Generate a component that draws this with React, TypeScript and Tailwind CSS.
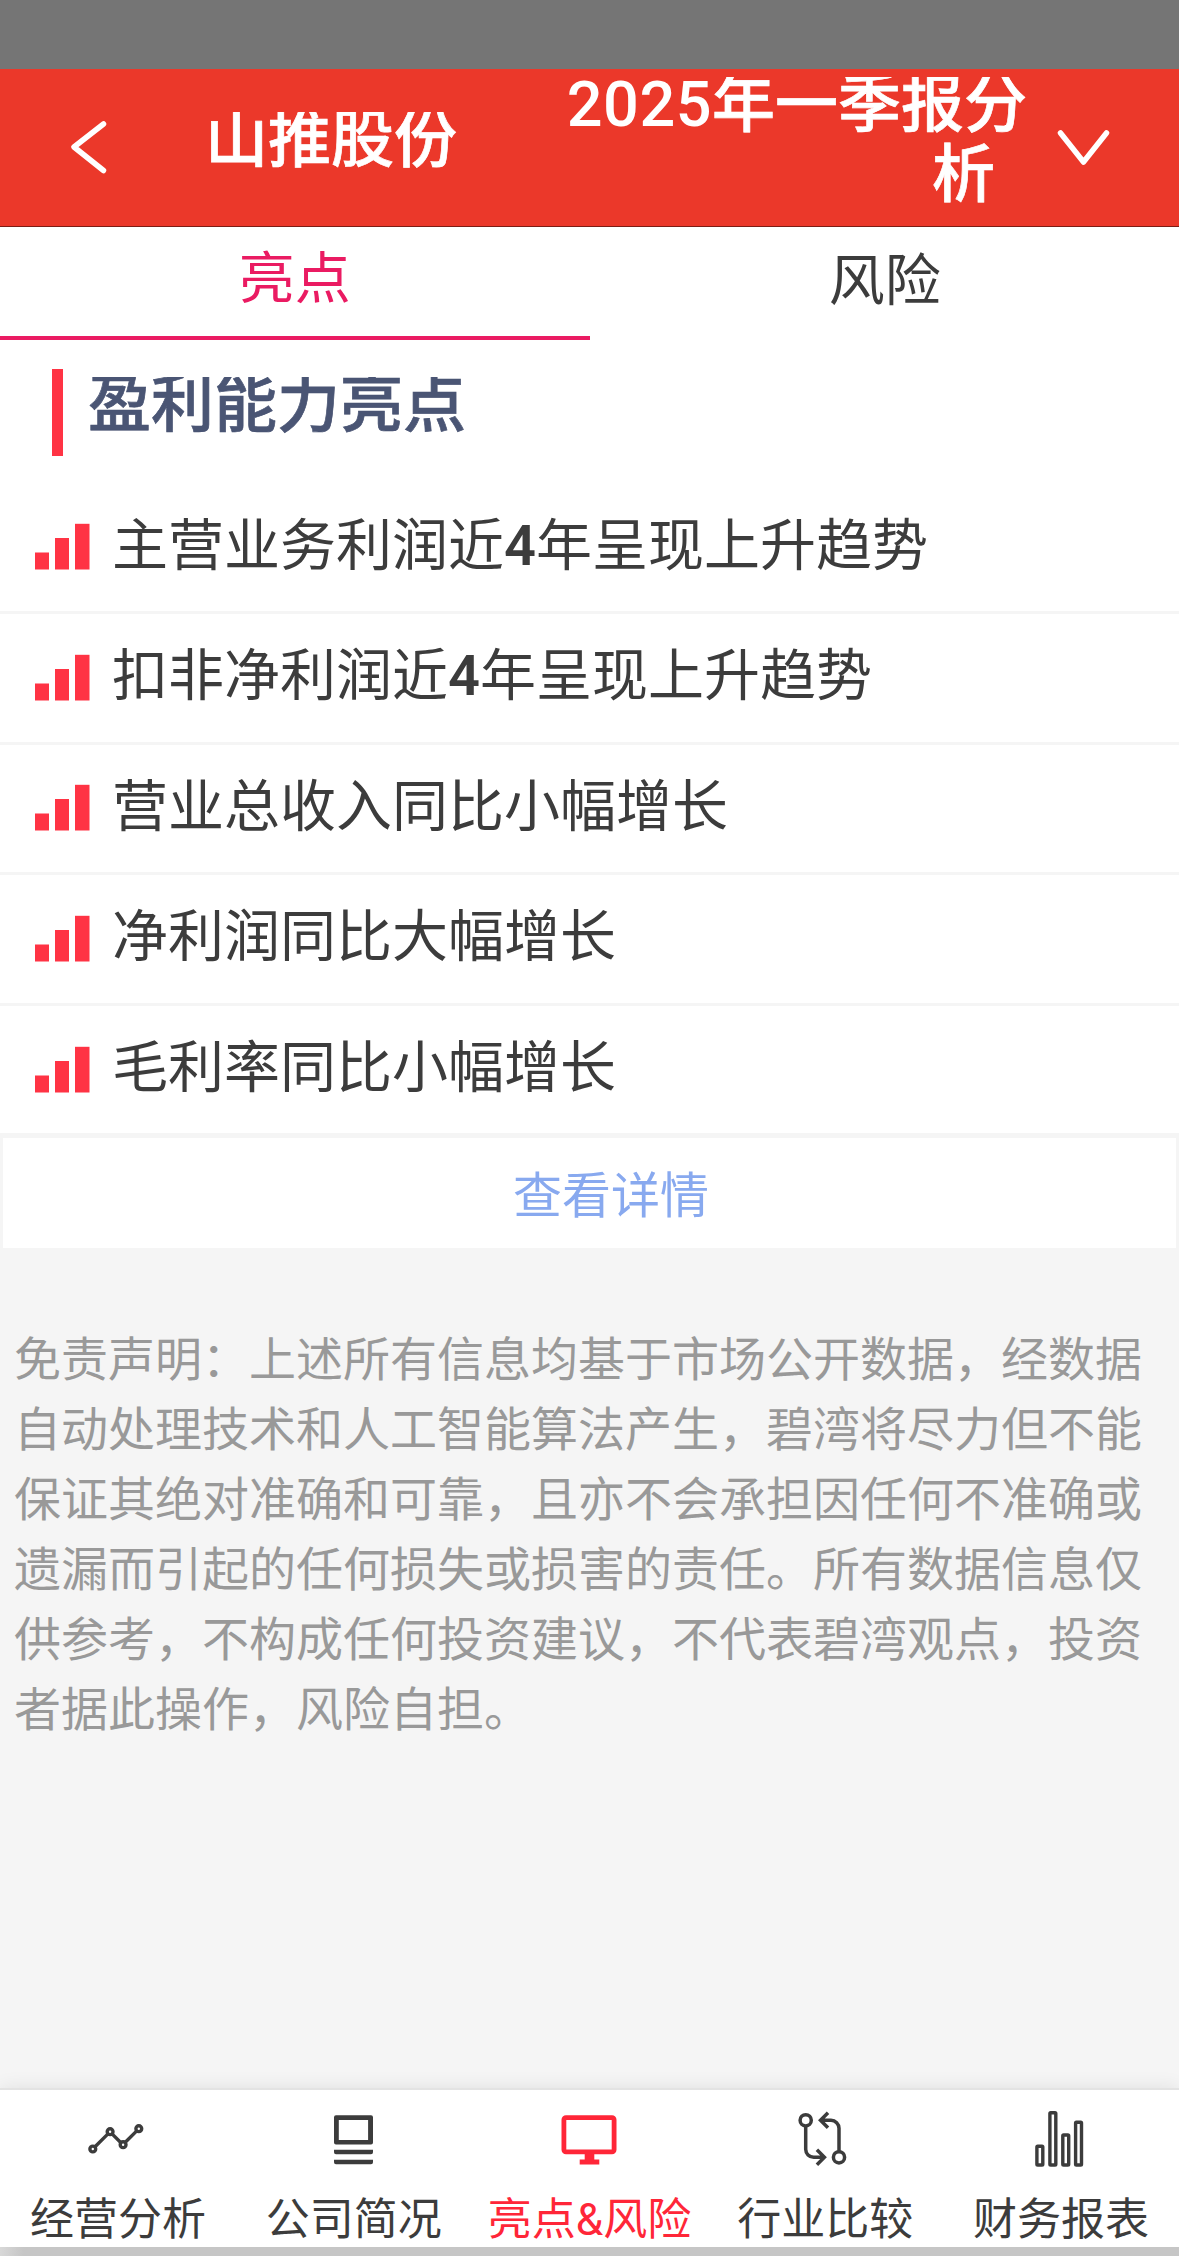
import React from "react";

type Part = { text: string; strong?: boolean };

const highlights: Part[][] = [
  [{ text: "主营业务利润近" }, { text: "4", strong: true }, { text: "年呈现上升趋势" }],
  [{ text: "扣非净利润近" }, { text: "4", strong: true }, { text: "年呈现上升趋势" }],
  [{ text: "营业总收入同比小幅增长" }],
  [{ text: "净利润同比大幅增长" }],
  [{ text: "毛利率同比小幅增长" }],
];

const disclaimer =
  "免责声明：上述所有信息均基于市场公开数据，经数据自动处理技术和人工智能算法产生，碧湾将尽力但不能保证其绝对准确和可靠，且亦不会承担因任何不准确或遗漏而引起的任何损失或损害的责任。所有数据信息仅供参考，不构成任何投资建议，不代表碧湾观点，投资者据此操作，风险自担。";

function BarsIcon() {
  return (
    <svg width="56" height="48" viewBox="0 0 56 48" className="shrink-0" fill="#ff3344">
      <rect x="0" y="29.5" width="14" height="17" />
      <rect x="20" y="15" width="14" height="31.5" />
      <rect x="40" y="0.8" width="14.5" height="45.7" />
    </svg>
  );
}

function TrendIcon() {
  return (
    <svg width="60" height="60" viewBox="0 0 60 60" fill="none" stroke="currentColor" strokeWidth="3.400">
      <circle cx="4.800" cy="39" r="2.900" />
      <circle cx="22.100" cy="21.700" r="2.900" />
      <circle cx="35.100" cy="34.700" r="2.900" />
      <circle cx="50.800" cy="18.700" r="2.900" />
      <path d="M7.300 36.500 19.700 24.100M24.300 24.100l8.400 8.400M37.300 32.300l11.200-11.200" />
    </svg>
  );
}

function DeskIcon() {
  return (
    <svg width="60" height="60" viewBox="0 0 60 60" fill="currentColor">
      <path
        fillRule="evenodd"
        d="M12 5.300h35a2 2 0 0 1 2 2v25.300a2 2 0 0 1-2 2h-35a2 2 0 0 1-2-2V7.300a2 2 0 0 1 2-2ZM14.800 10.100v20h29.300v-20Z"
      />
      <path d="M10 39.700h39v2.500a2 2 0 0 1-2 2h-35a2 2 0 0 1-2-2ZM10 49.700h39v2.500a2 2 0 0 1-2 2h-35a2 2 0 0 1-2-2Z" />
    </svg>
  );
}

function MonitorIcon() {
  return (
    <svg width="60" height="60" viewBox="0 0 60 60" fill="currentColor">
      <path
        fillRule="evenodd"
        d="M7 5.300h46a4.500 4.500 0 0 1 4.500 4.500v30a4.500 4.500 0 0 1-4.500 4.500H35.300v5.200h5V54.500H20.700V49.500h5v-5.200H7a4.500 4.500 0 0 1-4.500-4.500v-30A4.500 4.500 0 0 1 7 5.300ZM7.300 10.100v29.500h45.400V10.100Z"
      />
    </svg>
  );
}

function CompareIcon() {
  return (
    <svg width="60" height="60" viewBox="0 0 60 60" fill="none" stroke="currentColor" strokeWidth="3.500">
      <circle cx="10.700" cy="10.300" r="5.600" />
      <circle cx="44" cy="47.300" r="5.600" />
      <path d="M10.700 16v23.300a8 8 0 0 0 8 8h11.500M21.900 39.800l7.500 7.500-7.500 7.500" />
      <path d="M44 41.500V18.300a8 8 0 0 0-8-8H24.700M33 2.800l-7.500 7.500 7.500 7.500" />
    </svg>
  );
}

function ChartIcon() {
  return (
    <svg width="60" height="60" viewBox="0 0 60 60" fill="none" stroke="currentColor" strokeWidth="3.400">
      <rect x="5.900" y="36.300" width="5.900" height="18.700" rx="0.8" />
      <rect x="18.900" y="2.800" width="5.900" height="52.200" rx="0.8" />
      <rect x="31.800" y="25" width="5.900" height="30" rx="0.8" />
      <rect x="44.600" y="12.200" width="5.900" height="42.800" rx="0.8" />
    </svg>
  );
}

const navItems = [
  { label: "经营分析", icon: <TrendIcon /> },
  { label: "公司简况", icon: <DeskIcon /> },
  {
    label: "亮点&风险",
    content: (
      <>
        亮点<span className="font-[Roboto] leading-none">&amp;</span>风险
      </>
    ),
    icon: <MonitorIcon />,
    active: true,
  },
  { label: "行业比较", icon: <CompareIcon /> },
  { label: "财务报表", icon: <ChartIcon /> },
];

export default function App() {
  return (
    <div
      lang="zh-CN"
      className="flex h-[2256px] w-[1179px] flex-col overflow-hidden bg-[#f5f5f5] font-['Noto_Sans_CJK_SC',sans-serif] text-[#3c3c3c]"
    >
      <div className="h-[69px] shrink-0 bg-[#757575]" />

      <header className="flex h-[158px] shrink-0 border-b border-[#7c1d15] bg-[#eb382a] text-[63px] font-medium text-white [-webkit-text-stroke:0.7px_currentColor]">
        <svg width="140" height="157" viewBox="0 0 140 157" className="shrink-0" fill="none" stroke="currentColor" strokeWidth="5.500" strokeLinecap="round" strokeLinejoin="round">
          <path d="M103.500 55 74 78l29.500 23.500" />
        </svg>
        <div className="mt-[43px] h-[68px] w-[400px] shrink-0 overflow-hidden pl-[65px]">
          <div className="-mt-[13px] leading-[70px]">山推股份</div>
        </div>
        <div className="mt-[8px] h-[140px] w-[490px] shrink-0 overflow-hidden text-right">
          <div className="-mt-[13px] h-[70px] whitespace-nowrap pr-[3px] leading-[70px]">
            <span className="font-[Roboto] leading-none tracking-[0.5px] [-webkit-text-stroke:0]">2025</span>年一季报分
          </div>
          <div className="h-[70px] pr-[35px] leading-[70px]">析</div>
        </div>
        <svg width="149" height="157" viewBox="0 0 149 157" className="shrink-0" fill="none" stroke="currentColor" strokeWidth="5.500" strokeLinecap="round" strokeLinejoin="round">
          <path d="M30.500 64 53.500 93l23-29" />
        </svg>
      </header>

      <div className="grid h-[113px] shrink-0 grid-cols-2 bg-white text-center text-[56px] leading-[94px]">
        <div className="border-b-4 border-[#ea1b62] text-[#ea1b62]">亮点</div>
        <div className="pl-px pt-[2px]">风险</div>
      </div>

      <section className="shrink-0 bg-white">
        <div className="flex h-[143.400px] pl-[52px] pt-[29px]">
          <div className="h-[87px] w-[11px] bg-[#ff3344]" />
          <h2 className="mt-[8px] h-[75px] overflow-hidden pl-[25px] text-[63px] font-medium text-[#4a5574] [-webkit-text-stroke:0.7px_currentColor]">
            <div className="-mt-[13px] leading-[70px]">盈利能力亮点</div>
          </h2>
        </div>
        <ul>
          {highlights.map((parts, i) => (
            <li
              key={i}
              className="flex h-[130.600px] items-center border-b-[3px] border-[#f5f5f5] pl-[35px] text-[56px]"
            >
              <BarsIcon />
              <div className="-mt-[13px] h-[80px] whitespace-nowrap pl-[21px] leading-[80px]">
                {parts.map((p, j) =>
                  p.strong ? (
                    <b key={j} className="font-[Roboto] font-semibold leading-none">
                      {p.text}
                    </b>
                  ) : (
                    <span key={j}>{p.text}</span>
                  ),
                )}
              </div>
            </li>
          ))}
        </ul>
      </section>

      <button className="mx-[3px] mt-[1.600px] h-[110px] shrink-0 bg-white pl-[43px] text-center text-[49px] text-[#88a9ef]">
        <span className="block h-[110px] leading-[108px]">查看详情</span>
      </button>

      <p className="mt-[73px] shrink-0 break-all pl-[14px] pr-[30px] text-[47px] leading-[70px] text-[#999999]">
        {disclaimer}
      </p>

      <nav className="mt-auto grid h-[159px] shrink-0 grid-cols-5 border-t-2 border-[#e3e3e3] bg-white text-[44px] shadow-[0_0_18px_rgba(0,0,0,0.09)]">
        {navItems.map((item) => (
          <div
            key={item.label}
            className={
              item.active
                ? "flex flex-col items-center pt-[20px] text-[#ff2638]"
                : "flex flex-col items-center pt-[20px]"
            }
          >
            {item.icon}
            <span className="mt-[16px] h-[60px] whitespace-nowrap leading-[60px]">
              {item.content ?? item.label}
            </span>
          </div>
        ))}
      </nav>
      <div className="relative h-[9px] shrink-0 bg-linear-to-r from-[#d8d8d8] via-[#c6c6c6] via-[2%] to-[#c6c6c6]" />
    </div>
  );
}
